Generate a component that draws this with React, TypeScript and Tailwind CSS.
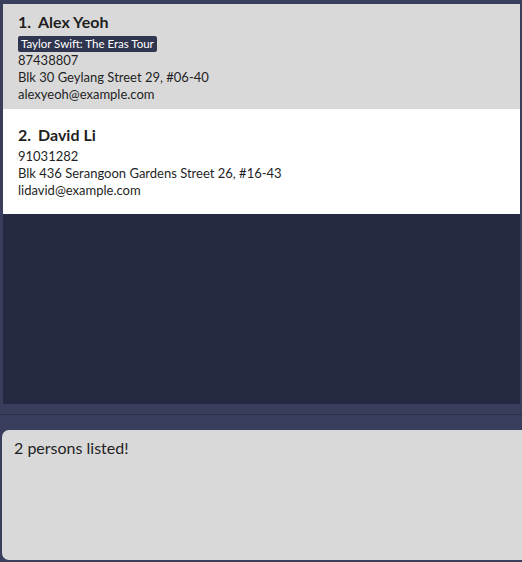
import React from 'react';

type Person = {
  name: string;
  tags: string[];
  phone: string;
  address: string;
  email: string;
};

const persons: Person[] = [
  {
    name: 'Alex Yeoh',
    tags: ['Taylor Swift: The Eras Tour'],
    phone: '87438807',
    address: 'Blk 30 Geylang Street 29, #06-40',
    email: 'alexyeoh@example.com',
  },
  {
    name: 'David Li',
    tags: [],
    phone: '91031282',
    address: 'Blk 436 Serangoon Gardens Street 26, #16-43',
    email: 'lidavid@example.com',
  },
];

function PersonCard({ person, index }: { person: Person; index: number }) {
  const hasTags = person.tags.length > 0;
  return (
    <div
      className={`h-[105px] px-[15px] flex flex-col justify-center ${index % 2 === 0 ? 'bg-[#d9d9d9]' : 'bg-white'}`}
    >
      <div className="flex items-center h-[22px] text-[16px] font-bold text-[#1f1f1f] leading-none">
        <span className="w-[20px]">{index + 1}.</span>
        <span>{person.name}</span>
      </div>
      {hasTags ? (
        <div className="flex gap-1 mt-[3px]">
          {person.tags.map((tag) => (
            <span
              key={tag}
              className="bg-[#30364f] text-white text-[11.5px] leading-[16px] px-[3px] rounded-[2px]"
            >
              {tag}
            </span>
          ))}
        </div>
      ) : (
        <div className="h-[2px]" />
      )}
      <div className="text-[13px] leading-[17px] text-[#1f1f1f]">
        <p>{person.phone}</p>
        <p>{person.address}</p>
        <p>{person.email}</p>
      </div>
    </div>
  );
}

export default function App() {
  return (
    <div
      className="w-[522px] h-[562px] bg-[#383e5b] flex flex-col overflow-hidden"
      style={{ fontFamily: 'Lato, "Open Sans", sans-serif' }}
    >
      <div className="ml-[3px] mr-[2px] mt-[4px] h-[400px] bg-[#252a42]">
        {persons.map((p, i) => (
          <PersonCard key={p.name} person={p} index={i} />
        ))}
      </div>
      <div className="h-[10px]" />
      <div className="h-[1px] bg-[#2a2f48]" />
      <div className="h-[15px]" />
      <div className="ml-[2px] h-[130px] bg-[#d9d9d9] rounded-l-[7px] px-[12px] pt-[6px]">
        <p className="text-[16px] text-[#1f1f1f]">2 persons listed!</p>
      </div>
    </div>
  );
}
